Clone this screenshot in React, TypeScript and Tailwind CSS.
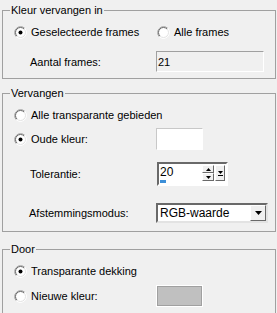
import React from 'react';

const Radio: React.FC<{ checked?: boolean }> = ({ checked }) => (
  <svg width="13" height="13" viewBox="0 0 13 13" className="shrink-0">
    <circle cx="6.5" cy="6.5" r="6" fill="#ffffff" />
    <path d="M10.74 2.26 A6 6 0 0 0 2.26 10.74" fill="none" stroke="#a0a0a0" strokeWidth="1" />
    <path d="M10.04 2.96 A5 5 0 0 0 2.96 10.04" fill="none" stroke="#696969" strokeWidth="1" />
    <path d="M10.74 2.26 A6 6 0 0 1 2.26 10.74" fill="none" stroke="#ffffff" strokeWidth="1" />
    <path d="M10.04 2.96 A5 5 0 0 1 2.96 10.04" fill="none" stroke="#e3e3e3" strokeWidth="1" />
    {checked && <circle cx="6.5" cy="6.5" r="2" fill="#000000" />}
  </svg>
);

const RadioRow: React.FC<{ label: string; checked?: boolean; className?: string }> = ({ label, checked, className }) => (
  <div className={`flex items-center gap-[4px] ${className ?? ''}`}>
    <Radio checked={checked} />
    <span>{label}</span>
  </div>
);

export default function App() {
  return (
    <div className="w-[277px] h-[313px] overflow-hidden bg-[#f0f0f0] pt-[3px] text-[11px] leading-[14px] text-black font-['Liberation_Sans',Arial,sans-serif]">
      {/* Kleur vervangen in */}
      <fieldset className="ml-[2px] mr-[1px] border border-[#a0a0a0] px-[7px] pb-[6px]">
        <legend className="px-[1px]">Kleur vervangen in</legend>
        <div className="mt-[7px] ml-[4px] flex h-[16px] items-center">
          <RadioRow label="Geselecteerde frames" checked className="w-[143px]" />
          <RadioRow label="Alle frames" />
        </div>
        <div className="mt-[11px] ml-[4px] flex h-[21px] items-center">
          <span className="w-[142px] pl-[16px]">Aantal frames:</span>
          <div className="flex h-[21px] w-[108px] items-center border border-t-[#a0a0a0] border-l-[#a0a0a0] border-b-white border-r-white bg-[#f0f0f0] pl-[1px]">
            21
          </div>
        </div>
      </fieldset>

      {/* Vervangen */}
      <fieldset className="mt-[7px] ml-[2px] mr-[1px] border border-[#a0a0a0] px-[7px] pb-[8px]">
        <legend className="px-[1px]">Vervangen</legend>
        <RadioRow label="Alle transparante gebieden" className="mt-[7px] ml-[4px] h-[16px]" />
        <div className="mt-[5px] ml-[4px] flex h-[22px] items-center">
          <RadioRow label="Oude kleur:" checked className="w-[142px]" />
          <div className="h-[22px] w-[47px] border border-t-[#c8c8c8] border-l-[#c8c8c8] border-b-white border-r-white bg-white" />
        </div>
        <div className="mt-[12px] ml-[4px] flex h-[24px] items-center">
          <span className="w-[143px] pl-[16px]">Tolerantie:</span>
          <div className="relative flex h-[24px] w-[71px] items-start border-2 border-t-[#696969] border-l-[#696969] border-b-white border-r-white bg-white">
            <span className="mt-[1px] w-[43px] pl-[1px] text-[12px] leading-[15px]">20</span>
            <div className="mt-[1px] flex flex-col">
              <div className="flex h-[8px] w-[12px] items-center justify-center border border-t-white border-l-white border-b-[#696969] border-r-[#696969] bg-[#f0f0f0]">
                <svg width="5" height="3" viewBox="0 0 5 3"><path d="M2.5 0 L5 3 L0 3 Z" fill="#000" /></svg>
              </div>
              <div className="flex h-[8px] w-[12px] items-center justify-center border border-t-white border-l-white border-b-[#696969] border-r-[#696969] bg-[#f0f0f0]">
                <svg width="5" height="3" viewBox="0 0 5 3"><path d="M0 0 L5 0 L2.5 3 Z" fill="#000" /></svg>
              </div>
            </div>
            <div className="mt-[1px] ml-[1px] flex h-[16px] w-[10px] flex-col items-center justify-center gap-[1px] border border-t-white border-l-white border-b-[#696969] border-r-[#696969] bg-[#f0f0f0]">
              <svg width="5" height="3" viewBox="0 0 5 3"><path d="M0 0 L5 0 L2.5 3 Z" fill="#000" /></svg>
              <div className="h-[1px] w-[5px] bg-black" />
            </div>
            <div className="absolute bottom-[1px] left-[1px] h-[3px] w-[6px] bg-[#3c8fd8]" />
          </div>
        </div>
        <div className="mt-[17px] ml-[3px] flex h-[20px] items-center">
          <span className="w-[143px] pl-[16px]">Afstemmingsmodus:</span>
          <div className="flex h-[20px] w-[112px] items-center border-2 border-t-[#696969] border-l-[#696969] border-b-[#e3e3e3] border-r-[#e3e3e3] bg-white">
            <span className="flex-1 pl-[2px] text-[12px]">RGB-waarde</span>
            <div className="flex h-[16px] w-[16px] items-center justify-center border border-t-white border-l-white border-b-[#696969] border-r-[#696969] bg-[#f0f0f0]">
              <svg width="7" height="4" viewBox="0 0 7 4"><path d="M0 0 L7 0 L3.5 4 Z" fill="#000" /></svg>
            </div>
          </div>
        </div>
      </fieldset>

      {/* Door */}
      <fieldset className="mt-[10px] ml-[2px] mr-[1px] border border-[#a0a0a0] px-[7px] pb-[20px]">
        <legend className="px-[1px]">Door</legend>
        <RadioRow label="Transparante dekking" checked className="mt-[7px] ml-[4px] h-[16px]" />
        <div className="mt-[6px] ml-[4px] flex h-[22px] items-center">
          <RadioRow label="Nieuwe kleur:" className="w-[142px]" />
          <div className="h-[22px] w-[47px] border border-white p-0">
            <div className="h-full w-full border border-[#a0a0a0] bg-[#c0c0c0]" />
          </div>
        </div>
      </fieldset>
    </div>
  );
}
